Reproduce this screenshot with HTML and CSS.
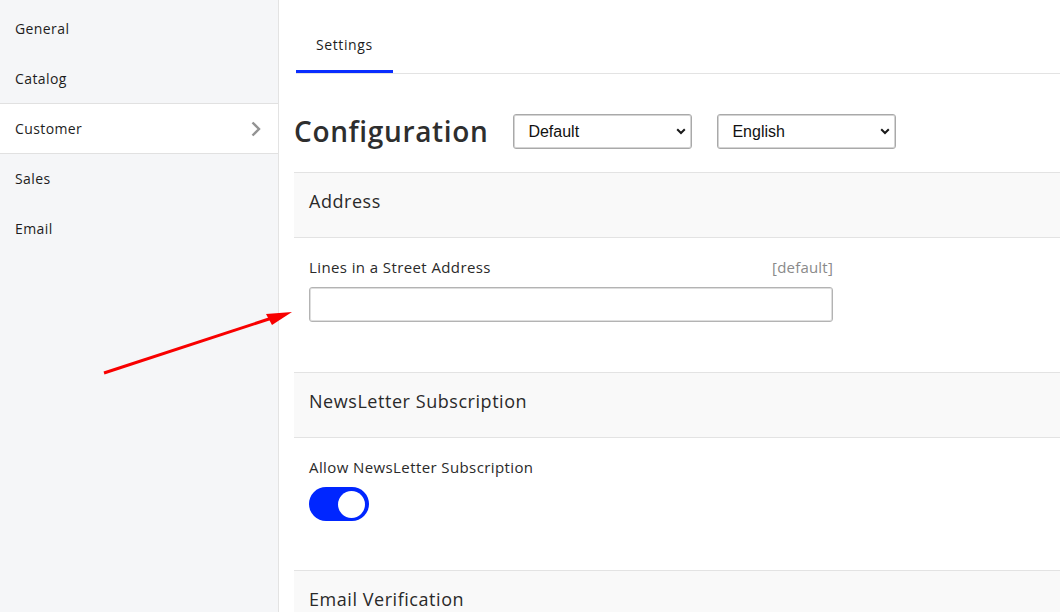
FILE: index.html
```html
<!DOCTYPE html>
<html lang="en">
<head>
<meta charset="utf-8">
<title>Configuration</title>
<link rel="stylesheet" href="styles.css">
</head>
<body>
<div class="page">
  <aside class="sidebar">
    <a class="nav-item">General</a>
    <a class="nav-item">Catalog</a>
    <a class="nav-item active">Customer
      <svg class="chev" width="12" height="16" viewBox="0 0 12 16"><path d="M2.5 1.5 L9 8 L2.5 14.5" fill="none" stroke="#939393" stroke-width="2.4"/></svg>
    </a>
    <a class="nav-item">Sales</a>
    <a class="nav-item">Email</a>
  </aside>
  <main class="main">
    <div class="tabs">
      <div class="tab active">Settings</div>
    </div>
    <div class="title-row">
      <h1 class="title">Configuration</h1>
      <div class="select-wrap">
        <select class="select"><option>Default</option></select>
        <svg class="select-caret" width="10" height="7" viewBox="0 0 10 7"><path d="M1.2 1.2 L5 5 L8.8 1.2" fill="none" stroke="#1a1a1a" stroke-width="2"/></svg>
      </div>
      <div class="select-wrap">
        <select class="select"><option>English</option></select>
        <svg class="select-caret" width="10" height="7" viewBox="0 0 10 7"><path d="M1.2 1.2 L5 5 L8.8 1.2" fill="none" stroke="#1a1a1a" stroke-width="2"/></svg>
      </div>
    </div>
    <section class="section">
      <div class="section-head">Address</div>
      <div class="section-body">
        <div class="field">
          <div class="field-label"><span>Lines in a Street Address</span><span class="hint">[default]</span></div>
          <input class="input" type="text">
        </div>
      </div>
    </section>
    <section class="section">
      <div class="section-head">NewsLetter Subscription</div>
      <div class="section-body short">
        <div class="field">
          <div class="field-label"><span>Allow NewsLetter Subscription</span></div>
          <div class="toggle"><span class="knob"></span></div>
        </div>
      </div>
    </section>
    <section class="section">
      <div class="section-head">Email Verification</div>
    </section>
  </main>
  <svg class="annotation" width="1060" height="612" viewBox="0 0 1060 612">
    <line x1="104" y1="373" x2="272" y2="318" stroke="#f80000" stroke-width="3"/>
    <polygon points="292,312 266,314 272,325" fill="#f80000"/>
  </svg>
</div>
</body>
</html>
```
FILE: styles.css
```css
* { box-sizing: border-box; }
html, body { margin: 0; padding: 0; }
body {
  font-family: "Open Sans", "DejaVu Sans", sans-serif;
  color: #2a2a2a;
  background: #fff;
}
.page {
  position: relative;
  display: flex;
  width: 1060px;
  height: 612px;
  overflow: hidden;
}
.sidebar {
  width: 279px;
  flex: none;
  background: #f5f6f8;
  border-right: 1px solid #e3e3e3;
  padding-top: 4px;
}
.nav-item {
  display: flex;
  align-items: center;
  justify-content: space-between;
  height: 50px;
  padding: 0 16px 0 15px;
  border-bottom: 1px solid transparent;
  font-size: 14px;
  letter-spacing: 0.4px;
  color: #1d1d1d;
}
.nav-item.active {
  background: #fff;
  border-bottom-color: #e1e1e1;
  box-shadow: 0 -1px 0 #e1e1e1;
}
.main {
  flex: 1;
  min-width: 0;
  padding-left: 15px;
}
.tabs {
  display: flex;
  margin-left: 2px;
  height: 74px;
  border-bottom: 1px solid #e3e3e3;
}
.tab {
  padding: 35px 20px 0 20px;
  height: 73px;
  line-height: 20px;
  font-size: 14px;
  letter-spacing: 0.6px;
  color: #1d1d1d;
  border-bottom: 3px solid #0a2dff;
}
.title-row {
  display: flex;
  align-items: center;
  gap: 25px;
  padding: 40px 0 23px;
}
.title {
  margin: 0;
  font-size: 28px;
  font-weight: 600;
  color: #2e2e2e;
  line-height: 35px;
  letter-spacing: 0.65px;
}
.select-wrap {
  position: relative;
  width: 179px;
  height: 35px;
}
.select {
  appearance: none;
  -webkit-appearance: none;
  width: 100%;
  height: 100%;
  border: 1px solid #a9a9a9;
  border-radius: 3px;
  box-shadow: inset 0 0 0 1px #d4d4d4;
  background: #fff;
  padding: 0 30px 0 14px;
  font-family: "Liberation Sans", Arial, sans-serif;
  font-size: 16px;
  color: #111;
}
.select-caret {
  position: absolute;
  right: 6px;
  top: 14px;
  pointer-events: none;
}
.section {
  border-top: 1px solid #e3e3e3;
}
.section-head {
  height: 65px;
  background: #f9f9f9;
  border-bottom: 1px solid #e3e3e3;
  padding: 0 15px 8px;
  display: flex;
  align-items: center;
  font-size: 18px;
  letter-spacing: 0.55px;
  color: #2a2a2a;
}
.section-body {
  padding: 19px 15px 50px;
}
.section-body.short { padding-bottom: 49px; }
.field { width: 524px; }
.field-label {
  display: flex;
  justify-content: space-between;
  line-height: 20px;
  font-size: 15px;
  letter-spacing: 0.4px;
  color: #2a2a2a;
  margin-bottom: 10px;
}
.hint { color: #8a8a8a; letter-spacing: 0.2px; }
.input {
  display: block;
  width: 524px;
  height: 35px;
  border: 1px solid #b3b3b3;
  box-shadow: inset 0 0 0 1px #dedede;
  border-radius: 3px;
  background: #fff;
}
.toggle {
  position: relative;
  width: 60px;
  height: 34px;
  border-radius: 17px;
  background: #0026ff;
}
.knob {
  position: absolute;
  right: 4px;
  top: 3.5px;
  width: 27px;
  height: 27px;
  border-radius: 50%;
  background: #fff;
}
.annotation {
  position: absolute;
  left: 0;
  top: 0;
  pointer-events: none;
}
```
